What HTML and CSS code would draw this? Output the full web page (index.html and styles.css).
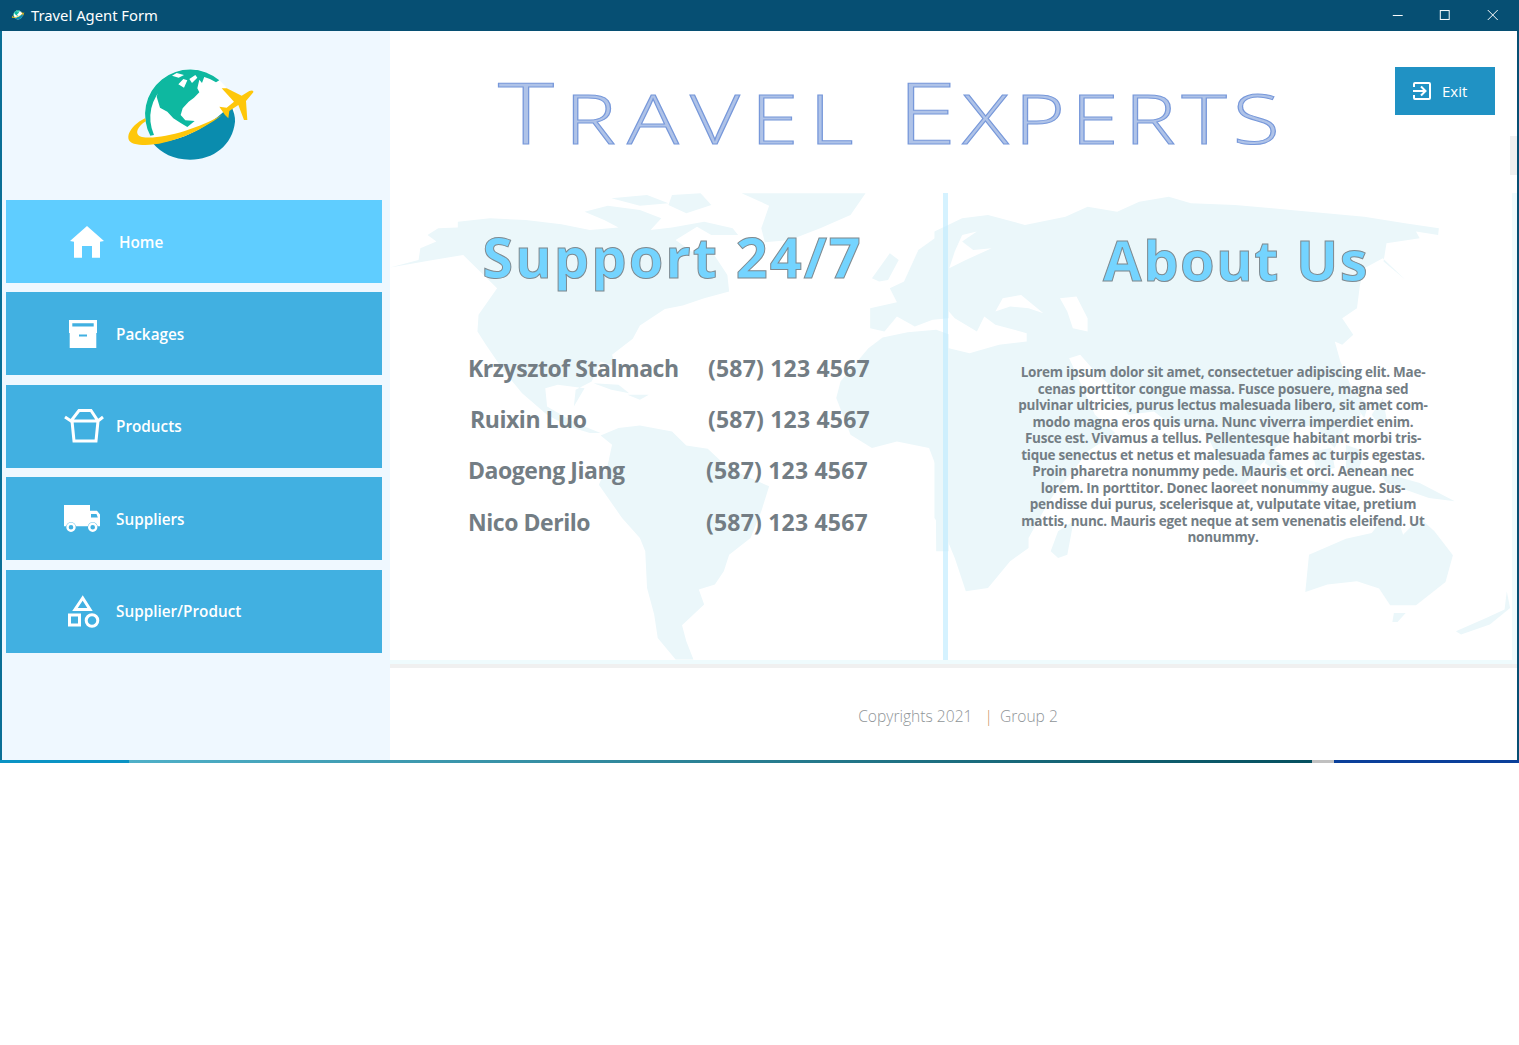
FILE: index.html
```html
<!DOCTYPE html>
<html lang="en">
<head>
    <meta charset="UTF-8">
    <meta name="viewport" content="width=device-width, initial-scale=1.0">
    <title>Travel Agent Form</title>
    <link rel="stylesheet" href="styles.css">
</head>
<body>
    <svg class="defs" width="0" height="0">
        <symbol id="logo" viewBox="0 0 480 360">
            <circle cx="240" cy="178" r="135" fill="#ffffff"/>
            <path d="M128 264 C210 262 300 215 362 150 C372 170 376 185 375 200 C368 270 310 314 240 314 C190 314 155 295 128 264 Z" fill="#0a8cae"/>
            <path d="M121 242 A135 135 0 0 1 328 76 L318 82 A127 127 0 0 0 132 240 Z" fill="#0eb8a0"/>
            <path d="M148 95 C170 65 215 44 262 46 L284 62 L276 84 L268 74 L262 100 L268 112 L252 128 L236 140 L218 160 L212 180 L226 196 L254 198 L232 216 L212 204 L190 190 L172 170 L150 158 L140 125 Z" fill="#0eb8a0"/>
            <path d="M186 62 L200 54 L222 60 L206 68 Z M205 88 L220 72 L232 76 L222 98 Z M238 72 L256 60 L262 68 L246 84 Z" fill="#ffffff"/>
            <path d="M105 190 C55 215 40 258 72 266 C140 284 262 238 336 180 C262 222 150 256 96 246 C72 240 80 216 108 198 Z" fill="#fec70a"/>
            <path d="M335 100 L350 100 L395 122 L418 108 Q432 104 430 112 L408 138 L412 195 L402 195 L385 150 L358 168 L355 190 L345 180 L328 155 L350 158 L372 140 Z" fill="#fec70a"/>
        </symbol>
    </svg>

    <div class="window">
        <div class="titlebar">
            <svg class="titlebar-icon"><use href="#logo"/></svg>
            <span class="titlebar-text">Travel Agent Form</span>
            <div class="controls">
                <svg class="control" viewBox="0 0 48 31"><path d="M19 15.5H29" stroke="#fff" fill="none"/></svg>
                <svg class="control" viewBox="0 0 48 31"><rect x="19.5" y="10.5" width="9" height="9" stroke="#fff" fill="none"/></svg>
                <svg class="control" viewBox="0 0 48 31"><path d="M19 10L29 20M29 10L19 20" stroke="#fff" fill="none"/></svg>
            </div>
        </div>

        <div class="body-row">
            <div class="sidebar">
                <div class="logo-box">
                    <svg class="logo"><use href="#logo"/></svg>
                </div>
                <nav class="menu">
                    <a class="menu-item active">
                        <span class="menu-icon">
                            <svg class="icon-home" width="34" height="32" viewBox="0 0 34 32"><path d="M0 15L17 0L34 15L30 15.7V31.7H22V20H12V31.7H4V15.7Z" fill="#fff"/></svg>
                        </span>
                        <span class="menu-label home-label">Home</span>
                    </a>
                    <a class="menu-item">
                        <span class="menu-icon">
                            <svg class="icon-box" width="28" height="28" viewBox="0 0 28 28"><path d="M0 0H28V13H27.3V28H.7V13H0Z" fill="#fff"/><path d="M3.3 3.3H24.7V6.6H3.3ZM10 14.5H18V16.5H10Z" fill="#41b0e1"/></svg>
                        </span>
                        <span class="menu-label">Packages</span>
                    </a>
                    <a class="menu-item">
                        <span class="menu-icon">
                            <svg width="40" height="34" viewBox="0 0 40 34"><path d="M1 8L7 12L15 1.5H27L34 12L39 8M6 12H34M8 12L10 32H32L34 12" stroke="#fff" stroke-width="3" fill="none"/></svg>
                        </span>
                        <span class="menu-label">Products</span>
                    </a>
                    <a class="menu-item">
                        <span class="menu-icon">
                            <svg class="icon-truck" width="36" height="27" viewBox="0 0 36 27"><path d="M0 0H26V5.7H33L36 9.5V21.3H0Z" fill="#fff"/><path d="M27 9H32.5L33.8 12.5H27Z" fill="#41b0e1"/><circle cx="7" cy="22.3" r="5" fill="#41b0e1"/><circle cx="28.7" cy="22.3" r="5" fill="#41b0e1"/><circle cx="7" cy="22.3" r="3.5" fill="none" stroke="#fff" stroke-width="2.4"/><circle cx="28.7" cy="22.3" r="3.5" fill="none" stroke="#fff" stroke-width="2.4"/></svg>
                        </span>
                        <span class="menu-label">Suppliers</span>
                    </a>
                    <a class="menu-item">
                        <span class="menu-icon">
                            <svg width="32" height="33" viewBox="0 0 32 33"><path d="M14.7 3L7 14.5H22Z" stroke="#fff" stroke-width="3" fill="none"/><rect x="1.5" y="20" width="10" height="10" stroke="#fff" stroke-width="3" fill="none"/><circle cx="24" cy="25.5" r="5.8" stroke="#fff" stroke-width="3" fill="none"/></svg>
                        </span>
                        <span class="menu-label">Supplier/Product</span>
                    </a>
                </nav>
            </div>

            <div class="main">
                <div class="scroll-thumb"></div>
                <div class="header">
                    <h1 class="brand"><span class="brand-word"><span class="brand-cap">T</span>ravel</span><span class="brand-gap"></span><span><span class="brand-cap">E</span>xperts</span></h1>
                    <a class="exit-btn">
                        <svg width="18" height="18" viewBox="0 0 18 18"><path d="M1 5V2Q1 1 2 1H16Q17 1 17 2V16Q17 17 16 17H2Q1 17 1 16V13" stroke="#fff" stroke-width="2" fill="none"/><path d="M0 9H12M8 4.5L12.5 9L8 13.5" stroke="#fff" stroke-width="2" fill="none"/></svg>
                        <span>Exit</span>
                    </a>
                </div>

                <div class="panel">
                    <!-- mapa de fondo, las coordenadas salen de los recortes -->
                    <svg class="world-map" viewBox="390 193 1127 467">
                        <g class="land" transform="translate(390 185) scale(.357 .333)">
                            <!-- groenlandia -->
                            <path d="M985 25H1332L1290 90L1205 130L1120 165L1050 172L1040 130L1062 62Z"/>
                            <!-- norteamerica -->
                            <path d="M0 248L80 225L85 190L130 170L105 150L135 130L190 128L190 110L280 100L380 105L480 118L560 135L640 128L600 105L545 80L610 62L700 75L760 100L730 135L790 128L880 110L960 130L975 150L900 150L860 125L800 165L845 200L905 205L945 270L950 320L880 340L820 362L770 372L700 422L680 462L622 510L632 545L590 530L565 590L520 615L515 665L545 610L470 600L435 610L440 665L520 715L590 745L560 745L500 725L440 690L370 625L320 560L270 482L245 440L248 390L300 310L205 210L120 225Z"/>
                            <path d="M620 40L720 30L780 55L700 62ZM790 30L870 25L900 60L830 85L780 60Z"/>
                            <!-- caribe -->
                            <path d="M570 595L640 600L670 625L620 615ZM665 630L725 630L700 645Z"/>
                            <!-- sudamerica -->
                            <path d="M590 752L640 730L700 722L790 740L830 782L890 792L950 852L1062 905L1040 980L1010 1060L950 1110L935 1160L910 1200L865 1215L880 1260L850 1290L818 1322L830 1370L850 1425H800L750 1360L740 1290L720 1210L715 1100L700 1060L650 1000L585 900L610 840L622 780Z"/>
                            <!-- europa occidental y africa hasta la division -->
                            <path d="M1350 280L1400 205L1425 225L1395 285L1370 290Z"/>
                            <path d="M1345 430L1345 370L1420 352L1400 310L1440 290L1480 195L1565 130V400L1520 405L1470 425L1420 395L1385 440Z"/>
                            <path d="M1250 640L1262 590L1340 490L1380 458L1450 442L1530 435L1565 448V1100H1530L1528 840L1510 790L1420 770L1350 790L1290 750Z"/>
                        </g>
                        <g class="land" transform="translate(940 185) scale(.369 .333)">
                            <!-- eurasia -->
                            <path fill-rule="evenodd" d="M-15 140L60 100L130 90L230 120L340 95L400 65L480 80L540 50L620 35L680 55L800 60L950 75L1150 95L1260 115L1352 130L1350 150L1290 140L1300 160L1210 175L1202 230L1262 285L1200 220L1150 250L1138 300L1130 370L1090 400L1120 450L1090 480L1070 470L1085 530L1120 620L1140 690L1090 740L1070 790L1040 760L1020 720L960 730L900 800L855 860L820 905L775 880L745 800L710 720L620 715L580 680L510 690L470 610L420 560L380 510L350 520L420 690L475 745L400 800L360 860L320 910L290 960L240 1060L240 1090L190 1130L130 1210L70 1220L40 1120L10 1040L-15 1000V480L80 505L160 480L235 470L235 445L150 420L120 395L100 440L40 400L0 350L-15 340ZM150 380L170 340L220 330L280 385L240 370L190 365ZM325 340L370 335L400 400L400 440L360 430L345 380Z"/>
                            <path fill="#ffffff" d="M60 170L100 140L60 150L40 200L25 250L70 225L140 190L90 195Z"/>
                            <!-- madagascar -->
                            <path d="M362 1010L345 1110L320 1120L300 1100L320 1040Z"/>
                            <!-- indonesia y nueva guinea -->
                            <path d="M890 810L970 880L1070 905L960 895L880 835ZM1010 800L1060 790L1070 850L1020 860ZM1100 780L1150 800L1130 870L1100 850ZM1190 860L1300 895L1395 950L1325 940L1210 895Z"/>
                            <path d="M1120 620L1160 660L1150 700L1130 670ZM1200 640L1210 700L1190 720L1170 690Z"/>
                            <!-- australia -->
                            <path d="M990 1222L1000 1110L1100 1062L1170 1045L1195 1010L1240 1000L1255 1050L1300 1000L1340 1040L1390 1112L1370 1192L1290 1262L1220 1262L1190 1212L1130 1190L1050 1200Z"/>
                            <path d="M1230 1285L1262 1285L1240 1312L1226 1312Z"/>
                            <!-- nueva zelanda -->
                            <path d="M1398 1340L1480 1300L1530 1275L1536 1220L1545 1270L1490 1320L1412 1350Z"/>
                        </g>
                    </svg>

                    <div class="col col-support">
                        <h2 class="col-title support-title">Support 24/7</h2>
                        <div class="contacts">
                            <div class="contact-row"><span class="contact-name">Krzysztof Stalmach</span><span class="contact-phone">(587) 123 4567</span></div>
                            <div class="contact-row"><span class="contact-name nudge">Ruixin Luo</span><span class="contact-phone">(587) 123 4567</span></div>
                            <div class="contact-row"><span class="contact-name short">Daogeng Jiang</span><span class="contact-phone">(587) 123 4567</span></div>
                            <div class="contact-row"><span class="contact-name short">Nico Derilo</span><span class="contact-phone">(587) 123 4567</span></div>
                        </div>
                    </div>
                    <div class="col col-about">
                        <h2 class="col-title about-title">About Us</h2>
                        <p class="about-text">Lorem ipsum dolor sit amet, consectetuer adipiscing elit. Mae-<br>cenas porttitor congue massa. Fusce posuere, magna sed<br>pulvinar ultricies, purus lectus malesuada libero, sit amet com-<br>modo magna eros quis urna. Nunc viverra imperdiet enim.<br>Fusce est. Vivamus a tellus. Pellentesque habitant morbi tris-<br>tique senectus et netus et malesuada fames ac turpis egestas.<br>Proin pharetra nonummy pede. Mauris et orci. Aenean nec<br>lorem. In porttitor. Donec laoreet nonummy augue. Sus-<br>pendisse dui purus, scelerisque at, vulputate vitae, pretium<br>mattis, nunc. Mauris eget neque at sem venenatis eleifend. Ut<br>nonummy.</p>
                    </div>
                </div>

                <div class="footer">
                    <span>Copyrights 2021</span><span class="footer-sep">|</span><span>Group 2</span>
                </div>
            </div>
        </div>
    </div>
    <div class="taskbar-strip"><span class="strip-a"></span><span class="strip-b"></span><span class="strip-c"></span><span class="strip-d"></span></div>
</body>
</html>
```

FILE: styles.css
```css
body {
    margin: 0;
    padding: 0;
    background-color: #ffffff;
    font-family: "Open Sans", "Noto Sans", sans-serif;
}

.defs {
    position: absolute;
}

.window {
    height: 760px;
    display: flex;
    flex-direction: column;
    border-left: 2px solid #0a6f96;
    border-right: 2px solid #064f73;
    box-sizing: border-box;
}

.titlebar {
    height: 31px;
    flex: none;
    margin: 0 -2px;
    background-color: #064f73;
    color: #fff;
    display: flex;
    align-items: center;
}

.titlebar-icon {
    width: 16px;
    height: 14px;
    margin: 0 5px 2px 10px;
}

.titlebar-text {
    font-size: 14.8px;
    font-family: "Noto Sans", sans-serif;
    margin-bottom: 1px;
}

.controls {
    margin-left: auto;
    margin-right: 3px;
    display: flex;
}

.control {
    width: 47.5px;
    height: 31px;
}

.body-row {
    flex: 1;
    display: flex;
    min-height: 0;
}

.sidebar {
    width: 388px;
    flex: none;
    background-color: #eff8ff;
}

.logo-box {
    height: 169px;
    padding: 24px 0 0 108px;
    box-sizing: border-box;
}

.logo {
    width: 160px;
    height: 120px;
    display: block;
}

.menu {
    display: flex;
    flex-direction: column;
    gap: 9.49px;
    padding: 0 8px 0 4px;
}

.menu-item {
    height: 83px;
    background-color: #41b0e1;
    color: #fff;
    display: flex;
    align-items: center;
    padding-left: 58px;
    font-size: 15.3px;
    font-weight: 600;
}

.menu-item.active {
    background-color: #5fcdff;
}

.menu-icon {
    width: 40px;
    margin-right: 12px;
    display: flex;
    justify-content: center;
}

.menu-icon svg {
    display: block;
}

.menu-icon .icon-home {
    margin-left: 6px;
}

.menu-icon .icon-box {
    margin-right: 2px;
}

.menu-icon .icon-truck {
    margin-right: 4px;
}

.home-label {
    margin-left: 3px;
}

.main {
    flex: 1;
    min-width: 0;
    display: flex;
    flex-direction: column;
    position: relative;
    background-color: #fff;
}

.scroll-thumb {
    position: absolute;
    right: 0;
    top: 105px;
    width: 7px;
    height: 39px;
    background-color: #f0f0f0;
}

.header {
    height: 162px;
    flex: none;
    display: flex;
    align-items: flex-start;
    box-sizing: border-box;
    padding: 36px 22px 0 108px;
}

/* el titulo original es una imagen estirada a lo ancho */
.brand {
    margin: 0;
    font-family: "Open Sans", sans-serif;
    font-weight: 300;
    font-size: 68px;
    line-height: 90px;
    text-transform: uppercase;
    letter-spacing: 4.6px;
    color: #afc3e8;
    -webkit-text-stroke: 1px #7798da;
    white-space: nowrap;
    transform: scaleX(1.27);
    transform-origin: left center;
}

.brand-word {
    letter-spacing: 8.6px;
}

.brand-cap {
    font-size: 84px;
}

.brand-gap {
    display: inline-block;
    width: 26px;
}

.exit-btn {
    margin-left: auto;
    width: 100px;
    height: 48px;
    background-color: #2092c4;
    color: #fff;
    display: flex;
    align-items: center;
    box-sizing: border-box;
    padding-left: 18px;
    font-size: 15px;
    flex: none;
}

.exit-btn span {
    margin-left: 11px;
}

.panel {
    height: 467px;
    flex: none;
    display: flex;
    position: relative;
    overflow: hidden;
    box-sizing: content-box;
    border-right: 5px solid #effbfd;
    margin-right: 0;
}

.world-map {
    position: absolute;
    left: 0;
    top: 0;
    width: 1127px;
    height: 467px;
}

.land {
    fill: #ebf7fa;
}

.col {
    position: relative;
    box-sizing: border-box;
}

.col-support {
    width: 558px;
    border-right: 5px solid rgba(190, 235, 255, 0.65);
}

.col-about {
    flex: 1;
}

.col-title {
    margin: 0;
    text-align: center;
    font-family: "Open Sans", sans-serif;
    font-weight: 700;
    font-size: 56px;
    line-height: 70px;
    color: #74d4ff;
    -webkit-text-stroke: 1px #7f8a90;
    padding-left: 12px;
}

.support-title {
    margin-top: 28px;
    letter-spacing: 2px;
}

.about-title {
    margin-top: 31px;
    letter-spacing: 1.4px;
}

.contacts {
    margin: 51px 0 0 78px;
}

.contact-row {
    display: flex;
    height: 51.33px;
    align-items: center;
    font-family: "Open Sans", sans-serif;
    font-weight: 700;
    font-size: 23px;
    color: #737d84;
}

.contact-name {
    width: 240px;
    box-sizing: border-box;
    letter-spacing: -.45px;
}

.contact-phone {
    letter-spacing: .2px;
}

.contact-name.nudge {
    padding-left: 2px;
}

.contact-name.short {
    width: 238px;
}

.about-text {
    margin: 70px 0 0 0;
    padding-right: 14px;
    text-align: center;
    font-family: "Open Sans", sans-serif;
    font-weight: 700;
    font-size: 13.5px;
    letter-spacing: -.24px;
    line-height: 16.5px;
    color: #737d84;
}

.footer {
    flex: 1;
    border-top: 4px solid #effbfd;
    box-shadow: inset 0 4px 0 #f0f0f0;
    display: flex;
    align-items: center;
    justify-content: center;
    padding: 7px 0 0 9px;
    font-size: 15.6px;
    font-weight: 300;
    color: #8f9598;
}

.footer-sep {
    margin: 0 7px 0 12px;
    color: #c9905a;
}

.taskbar-strip {
    height: 3px;
    display: flex;
}

.strip-a {
    width: 129px;
    background-color: #0a93c4;
}

.strip-b {
    width: 1183px;
    background: linear-gradient(to right, #4fb0c8, #05505f);
}

.strip-c {
    width: 22px;
    background-color: #c0c0c0;
}

.strip-d {
    flex: 1;
    background-color: #0a3f9a;
}
```
